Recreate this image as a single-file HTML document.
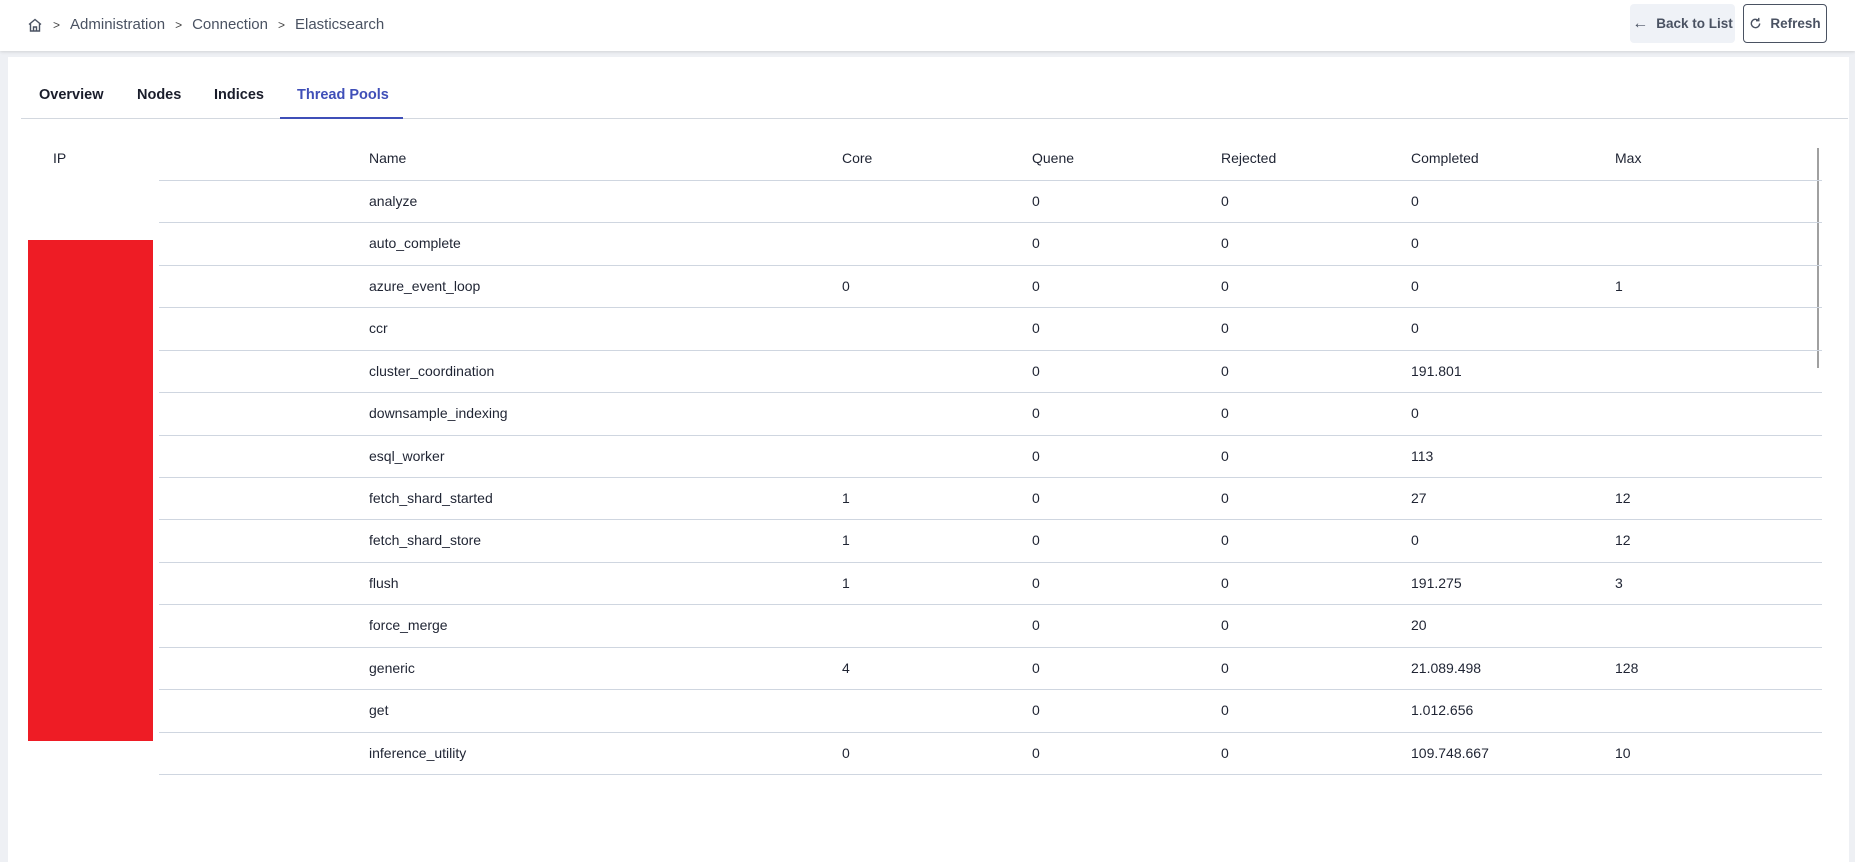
<!DOCTYPE html>
<html><head><meta charset="utf-8"><style>
*{box-sizing:border-box;margin:0;padding:0}
body{width:1855px;height:862px;overflow:hidden;background:#eef0f4;font-family:"Liberation Sans",Arial,sans-serif;color:#1f2433;font-size:14px;position:relative}
.hdr{position:absolute;left:0;top:0;width:1855px;height:51px;background:#fff;box-shadow:0 1px 3px rgba(0,0,0,.12)}
.bc{position:absolute;left:27px;top:16px;font-size:15px;color:#4a5262;display:flex;align-items:center;gap:10px}
.bc .s{color:#444;font-size:12px}
.btn{position:absolute;top:4px;height:39px;border-radius:4px;font-size:13.5px;font-weight:bold;color:#4a5262;display:flex;align-items:center;justify-content:center;gap:8px}
.card{position:absolute;left:8px;top:57px;width:1841px;height:805px;background:#fff}
.tabs{position:absolute;left:13px;top:0;width:1827px;height:62px;border-bottom:1px solid #d3d8df}
.tab{position:absolute;top:30px;font-weight:bold;font-size:14.5px;color:#1a1d2b}
.tab.a{color:#3f4fb8}
.ul{position:absolute;left:259px;top:60px;width:123px;height:2px;background:#3f4fb8}
.red{position:absolute;left:28px;top:240px;width:125px;height:501px;background:#ee1c25}
.line{position:absolute;left:159px;width:1663px;height:1px;background:#cfd6e0}
.t{position:absolute;font-size:14px;color:#1f2433;white-space:nowrap}
.sb{position:absolute;left:1817px;top:148px;width:2px;height:220px;background:#a0a0a0}
</style></head><body>
<div class="hdr">
 <div class="bc">
  <svg width="16" height="16" viewBox="0 0 16 16" fill="none" stroke="#4a5262" stroke-width="1.4"><path d="M2 7.5L8 2.5l6 5M3.5 6.5V14h9V6.5M6.5 14V10h3v4"/></svg>
  <span class="s">&gt;</span><span>Administration</span><span class="s">&gt;</span><span>Connection</span><span class="s">&gt;</span><span>Elasticsearch</span>
 </div>
 <div class="btn" style="left:1630px;width:105px;background:#eff2f7"><span style="font-size:16px;font-weight:normal">←</span>Back to List</div>
 <div class="btn" style="left:1743px;width:84px;border:1.5px solid #4a5262;background:#fff">
  <svg width="13" height="13" viewBox="0 0 14 14" fill="none" stroke="#4a5262" stroke-width="1.5"><path d="M11.5 7a4.5 4.5 0 1 1-1.5-3.4M10.5 1v3h-3"/></svg>Refresh</div>
</div>
<div class="card">
 <div class="tabs">
  <div class="tab" style="left:18px">Overview</div>
  <div class="tab" style="left:116px">Nodes</div>
  <div class="tab" style="left:193px">Indices</div>
  <div class="tab a" style="left:276px">Thread Pools</div>
  <div class="ul"></div>
 </div>
</div>
<div class="red"></div>
<div class="sb"></div>
<div id="tbl"></div>
<div class="t" style="left:53px;top:150px">IP</div>
<div class="t" style="left:369px;top:150px">Name</div>
<div class="t" style="left:842px;top:150px">Core</div>
<div class="t" style="left:1032px;top:150px">Quene</div>
<div class="t" style="left:1221px;top:150px">Rejected</div>
<div class="t" style="left:1411px;top:150px">Completed</div>
<div class="t" style="left:1615px;top:150px">Max</div>
<script>
var rows=[["analyze","","0","0","0",""],["auto_complete","","0","0","0",""],["azure_event_loop","0","0","0","0","1"],["ccr","","0","0","0",""],["cluster_coordination","","0","0","191.801",""],["downsample_indexing","","0","0","0",""],["esql_worker","","0","0","113",""],["fetch_shard_started","1","0","0","27","12"],["fetch_shard_store","1","0","0","0","12"],["flush","1","0","0","191.275","3"],["force_merge","","0","0","20",""],["generic","4","0","0","21.089.498","128"],["get","","0","0","1.012.656",""],["inference_utility","0","0","0","109.748.667","10"]];
var xs=[369,842,1032,1221,1411,1615],h='';
h+='<div class="line" style="top:180px"></div>';
rows.forEach(function(r,i){var top=180+i*42.43;
r.forEach(function(c,j){if(c)h+='<div class="t" style="left:'+xs[j]+'px;top:'+(top+13)+'px">'+c+'</div>';});
h+='<div class="line" style="top:'+(top+42.43)+'px"></div>';});
document.getElementById('tbl').innerHTML=h;
</script>
</body></html>
